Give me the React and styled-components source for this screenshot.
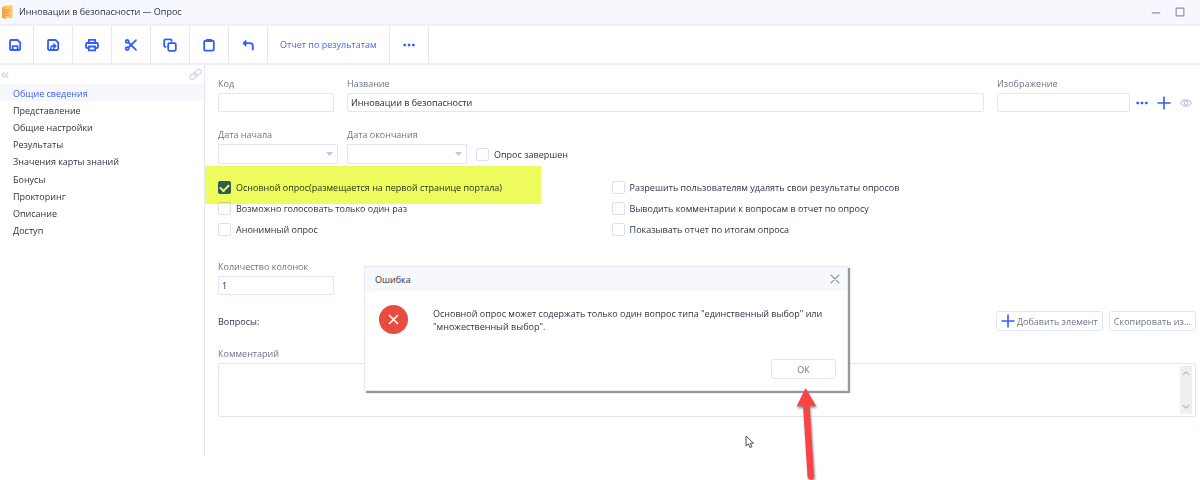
import React from "react";
import styled, { createGlobalStyle } from "styled-components";

const GlobalStyle = createGlobalStyle`
  * {
    box-sizing: border-box;
  }
  body {
    margin: 0;
    background: #fff;
    color: #2c3445;
    font: 9px/13px "Open Sans", "Noto Sans", sans-serif;
  }
  button, input, select, textarea {
    font: inherit;
    color: inherit;
  }
  svg {
    flex-shrink: 0;
  }
`

const Page = styled.div`
  position: relative;
  overflow: hidden;
  min-height: 100vh;
`

const TitleBar = styled.header`
  display: flex;
  align-items: center;
  height: 26px;
  padding: 0 14px 0 1px;
  background: #f7f8fd;
  border-bottom: 2px solid #eceffc;
`

const Title = styled.h1`
  flex: 1;
  margin: 0 0 0 6px;
  font-size: 9px;
  font-weight: 400;
  line-height: 14px;
`

const IconButton = styled.button`
  display: flex;
  align-items: center;
  justify-content: center;
  padding: 0;
  border: 0;
  background: none;
  color: ${props => props.$color || "#335cff"};
`

const WindowButtons = styled.div`
  display: flex;
  gap: 12px;
`

const Toolbar = styled.div`
  display: flex;
  height: 39px;
  border-bottom: 2px solid #eceffc;
`

const ToolButton = styled(IconButton)`
  width: ${props => props.$width || 39}px;
  border-right: 1px solid #e2e7fc;
  padding-right: ${props => props.$shift || 0}px;
`

const ReportButton = styled(ToolButton)`
  width: auto;
  padding: 0 12px;
  color: #4468f6;
`

const Body = styled.div`
  display: flex;
`

const Sidebar = styled.aside`
  width: 205px;
  height: 391px;
  flex-shrink: 0;
  border-right: 1px solid #e2e7fc;
`

const SidebarTop = styled.div`
  display: flex;
  align-items: center;
  justify-content: space-between;
  height: 19px;
  padding: 0 2px 0 1px;
`

const Nav = styled.nav`
  display: grid;
  height: 155px;
  grid-auto-rows: 1fr;
`

const NavItem = styled.a`
  display: flex;
  align-items: center;
  padding: 1px 0 0 13px;
  text-decoration: none;
  color: ${props => (props.$active ? "#3a5ff5" : "#2c3445")};
  background: ${props => (props.$active ? "#f7f8fd" : "transparent")};
`

const Form = styled.form`
  flex: 1;
  min-width: 0;
  padding: 12px 4px 0 13px;
`

const Row = styled.div`
  display: flex;
  align-items: flex-end;
  gap: ${props => props.$gap || 13}px;
  margin-bottom: ${props => props.$bottom || 0}px;
`

const Field = styled.label`
  display: flex;
  flex-direction: column;
  gap: 2px;
  line-height: 14px;
  color: #6c7588;
  width: ${props => (props.$width ? props.$width + "px" : "auto")};
  flex: ${props => (props.$grow ? "1" : "none")};
`

const Input = styled.input`
  width: 100%;
  height: 19px;
  padding: 0 3px;
  border: 1px solid #dfe5fc;
  border-radius: 2px;
  background: #fff;
  color: #1f2634;
`

const SelectBox = styled.span`
  display: grid;
  align-items: center;
  justify-items: end;
  > * {
    grid-area: 1 / 1;
  }
  svg {
    margin-right: 5px;
    pointer-events: none;
  }
`

const Select = styled.select`
  width: 100%;
  height: 20px;
  appearance: none;
  border: 1px solid #dfe5fc;
  border-radius: 1px;
  background: #fff;
`

const ImageActions = styled.div`
  display: flex;
  align-items: center;
  gap: 8px;
  height: 19px;
  margin: 0 3px 0 -8px;
`

const CheckLabel = styled.label`
  display: flex;
  align-items: center;
  gap: 5px;
  height: ${props => props.$height || 21}px;
`

const Checkbox = styled.input`
  display: grid;
  place-content: center;
  width: 13px;
  height: 13px;
  margin: 0;
  appearance: none;
  border: 1px solid #d9e0fb;
  border-radius: 2px;
  background: #fff;
  &:checked {
    border-color: #335cff;
    background: #335cff;
  }
  &:checked::before {
    content: "";
    width: 7px;
    height: 4px;
    margin-bottom: 2px;
    border: solid #fff;
    border-width: 0 0 2px 2px;
    transform: rotate(-45deg);
  }
`

const Options = styled.div`
  position: relative;
  display: grid;
  grid-template-columns: 2fr 3fr;
  column-gap: 4px;
  margin-bottom: 20px;
`

const Highlight = styled.div`
  position: absolute;
  top: -11px;
  left: -13px;
  width: 336px;
  height: 38px;
  background: #edfb5c;
  mix-blend-mode: multiply;
  pointer-events: none;
`

const QuestionsTitle = styled.h2`
  flex: 1;
  margin: 0;
  font-size: 9px;
  font-weight: 400;
`

const Button = styled.button`
  display: flex;
  align-items: center;
  justify-content: center;
  gap: 2px;
  height: 20px;
  padding: 0 4px;
  border: 1px solid #dfe5fc;
  border-radius: 3px;
  background: #fff;
  color: #6c7588;
  svg {
    color: #335cff;
  }
`

const Questions = styled(Row)`
  align-items: center;
`

const CommentBox = styled.span`
  display: flex;
  height: 54px;
  padding: 2px 3px;
  border: 1px solid #dfe5fc;
  border-radius: 2px;
`

const TextArea = styled.textarea`
  flex: 1;
  min-width: 0;
  padding: 0;
  border: 0;
  outline: 0;
  resize: none;
`

const ScrollTrack = styled.span`
  display: flex;
  flex-direction: column;
  align-items: center;
  justify-content: space-between;
  width: 12px;
  padding: 3px 0;
  background: #efefef;
`

const Dialog = styled.section`
  position: absolute;
  top: 266px;
  left: 364px;
  width: 484px;
  border: 1px solid #e6e9f8;
  background: #fff;
  box-shadow: 2px 2px 1px #999;
`

const DialogHeader = styled.header`
  display: flex;
  align-items: center;
  justify-content: space-between;
  height: 24px;
  padding: 0 7px 0 10px;
  background: #f7f8fd;
`

const DialogTitle = styled.h2`
  margin: 0;
  font-size: 9px;
  font-weight: 400;
`

const DialogBody = styled.div`
  display: flex;
  gap: 25px;
  padding: 14px 12px 12px 14px;
`

const Message = styled.p`
  margin: 2px 0 0;
`

const DialogFooter = styled.footer`
  display: flex;
  justify-content: flex-end;
  padding: 13px 11px 11px;
`

const OkButton = styled(Button)`
  width: 65px;
`

const Arrow = styled.svg`
  position: absolute;
  top: 386px;
  left: 792px;
`

const Cursor = styled.svg`
  position: absolute;
  top: 435px;
  left: 745px;
`

const Icon = ({ children, size = 14, ...rest }) => (
  <svg
    width={size}
    height={size}
    viewBox="0 0 14 14"
    fill="none"
    stroke="currentColor"
    strokeWidth="1.8"
    strokeLinecap="round"
    strokeLinejoin="round"
    aria-hidden="true"
    {...rest}
  >
    {children}
  </svg>
);

const Dots = () => (
  <Icon fill="currentColor" stroke="none">
    <rect x="1.4" y="5.800" width="2.6" height="2.4" rx=".6" />
    <rect x="5.7" y="5.800" width="2.6" height="2.4" rx=".6" />
    <rect x="10" y="5.800" width="2.6" height="2.4" rx=".6" />
  </Icon>
);

const Plus = () => (
  <Icon strokeLinecap="butt" strokeWidth="1.6">
    <path d="M7 .5v13M.5 7h13" />
  </Icon>
);

const tools = [
  {
    label: "Сохранить",
    width: 34,
    shift: 4,
    icon: <path d="M2 3.2C2 2.500 2.500 2 3.200 2h6.300l2.700 2.700v6.100c0 .7-.5 1.200-1.200 1.200H3.200C2.500 12 2 11.500 2 10.800zM4.600 12V8.200h5V12" />
  },
  {
    label: "Сохранить и закрыть",
    icon: (
      <>
        <path d="M2 3.200C2 2.500 2.500 2 3.200 2h6.300l2.700 2.700v6.100c0 .7-.5 1.200-1.200 1.200H3.200C2.500 12 2 11.500 2 10.800z" />
        <path d="M5 11.500V9.400c0-.8.500-1.300 1.300-1.300h2.900M7.600 6 9.700 8.100l-2.100 2.100" strokeWidth="1.600" />
      </>
    )
  },
  {
    label: "Печать",
    icon: <path d="M3.800 5V1.800h6.400V5M3.800 10H2.200C1.500 10 1 9.500 1 8.800V6.200C1 5.500 1.500 5 2.200 5h9.600c.7 0 1.200.5 1.200 1.200v2.600c0 .7-.5 1.200-1.200 1.200h-1.600M3.800 8.500h6.400v3.900H3.800z" />
  },
  {
    label: "Вырезать",
    icon: (
      <>
        <circle cx="3.200" cy="3.400" r="1.500" />
        <circle cx="3.200" cy="10.600" r="1.500" />
        <path d="M4.500 4.500 12 11.800M4.500 9.500 12 2.200" />
      </>
    )
  },
  {
    label: "Копировать",
    icon: (
      <>
        <rect x="5.200" y="5.200" width="7.600" height="7.600" rx="1.200" />
        <path d="M2.800 8.800h-.4C1.700 8.800 1.200 8.300 1.200 7.600V2.600c0-.7.5-1.200 1.200-1.200h5c.7 0 1.200.5 1.200 1.200V3" />
      </>
    )
  },
  {
    label: "Вставить",
    icon: (
      <>
        <path d="M4.600 2.600H3.400c-.7 0-1.200.5-1.200 1.200v7.600c0 .7.5 1.200 1.200 1.200h7.200c.7 0 1.200-.5 1.200-1.200V3.800c0-.7-.5-1.200-1.200-1.200H9.400" />
        <path d="M4.800 1.800h4.400v1.400H4.800z" />
      </>
    )
  },
  {
    label: "Отменить",
    icon: (
      <>
        <path d="M4 5.200h5.200c1.600 0 2.600 1 2.600 2.600v3.800" />
        <path d="M4.800 2.600 2.200 5.200l2.600 2.600z" fill="currentColor" strokeWidth="1.200" />
      </>
    )
  }
];

const sections = [
  "Общие сведения",
  "Представление",
  "Общие настройки",
  "Результаты",
  "Значения карты знаний",
  "Бонусы",
  "Прокторинг",
  "Описание",
  "Доступ"
];

const options = [
  "Основной опрос(размещается на первой странице портала)",
  "Разрешить пользователям удалять свои результаты опросов",
  "Возможно голосовать только один раз",
  "Выводить комментарии к вопросам в отчет по опросу",
  "Анонимный опрос",
  "Показывать отчет по итогам опроса"
];

const DateField = ({ label }) => (
  <Field $width={120}>
    {label}
    <SelectBox>
      <Select defaultValue="">
        <option value=""></option>
      </Select>
      <svg width="7" height="4" viewBox="0 0 7 4" aria-hidden="true">
        <path d="M0 0h7L3.500 4z" fill="#c0c8e4" />
      </svg>
    </SelectBox>
  </Field>
);

const Check = ({ label, checked, height }) => (
  <CheckLabel $height={height}>
    <Checkbox type="checkbox" defaultChecked={checked} />
    {label}
  </CheckLabel>
);

const ErrorDialog = () => (
  <Dialog role="alertdialog" aria-labelledby="dialog-title">
    <DialogHeader>
      <DialogTitle id="dialog-title">Ошибка</DialogTitle>
      <IconButton type="button" aria-label="Закрыть" $color="#7e8799">
        <Icon size={10} strokeWidth="1.5"><path d="M1.500 1.500l11 11M12.500 1.500l-11 11" /></Icon>
      </IconButton>
    </DialogHeader>
    <DialogBody>
      <svg width="29" height="29" viewBox="0 0 29 29" aria-hidden="true">
        <circle cx="14.500" cy="14.500" r="14.500" fill="#e74c3c" />
        <path d="M10 10l9 9M19 10l-9 9" stroke="#fff" strokeWidth="1.700" />
      </svg>
      <Message>
        Основной опрос может содержать только один вопрос типа "единственный выбор" или "множественный выбор".
      </Message>
    </DialogBody>
    <DialogFooter>
      <OkButton type="button">ОК</OkButton>
    </DialogFooter>
  </Dialog>
);

const App = () => (
  <Page>
    <GlobalStyle />
    <TitleBar>
      <svg width="12" height="14" viewBox="0 0 12 14" aria-hidden="true">
        <path d="M1 2.500 4 .5h6.500c.6 0 1 .4 1 1v10.500c0 .6-.4 1-1 1H1z" fill="#f7cb66" />
        <path d="M1 2.500h3.500V14L1 13z" fill="#eda748" />
        <path d="M4.500 5h4M4.500 7.500h3M4.500 10h4" stroke="#e58a3a" />
      </svg>
      <Title>Инновации в безопасности — Опрос</Title>
      <WindowButtons>
        <IconButton type="button" aria-label="Свернуть" $color="#8c92a6">
          <Icon size={12} strokeWidth="1.300"><path d="M2.500 8h9" /></Icon>
        </IconButton>
        <IconButton type="button" aria-label="Развернуть" $color="#8c92a6">
          <Icon size={12} strokeWidth="1.300" strokeLinejoin="miter"><path d="M2.500 2.500h9v9h-9z" /></Icon>
        </IconButton>
      </WindowButtons>
    </TitleBar>
    <Toolbar>
      {tools.map(tool => (
        <ToolButton key={tool.label} type="button" aria-label={tool.label} $width={tool.width} $shift={tool.shift}>
          <Icon>{tool.icon}</Icon>
        </ToolButton>
      ))}
      <ReportButton type="button">Отчет по результатам</ReportButton>
      <ToolButton type="button" aria-label="Ещё"><Dots /></ToolButton>
    </Toolbar>
    <Body>
      <Sidebar>
        <SidebarTop>
          <IconButton type="button" aria-label="Свернуть панель" $color="#c3cdf5">
            <Icon size={8} strokeWidth="2"><path d="M6 3 2 7l4 4M12 3 8 7l4 4" /></Icon>
          </IconButton>
          <IconButton type="button" aria-label="Ссылка" $color="#cdd5ee">
            <Icon size={13} strokeWidth="1.200">
              <g transform="rotate(-40 7 7)">
                <rect x="-.5" y="4.500" width="8.500" height="5" rx="2.500" />
                <rect x="6" y="4.500" width="8.500" height="5" rx="2.500" />
              </g>
            </Icon>
          </IconButton>
        </SidebarTop>
        <Nav>
          {sections.map((name, i) => (
            <NavItem key={name} href="#" $active={i === 0}>{name}</NavItem>
          ))}
        </Nav>
      </Sidebar>
      <Form>
        <Row $bottom={16}>
          <Field $width={116}>Код<Input type="text" /></Field>
          <Field $grow>Название<Input type="text" defaultValue="Инновации в безопасности" /></Field>
          <Field $width={133}>Изображение<Input type="text" /></Field>
          <ImageActions>
            <IconButton type="button" aria-label="Выбрать"><Dots /></IconButton>
            <IconButton type="button" aria-label="Добавить"><Plus /></IconButton>
            <IconButton type="button" aria-label="Просмотр" $color="#c0c8e4">
              <Icon strokeWidth="1.100">
                <path d="M1.500 7C4 2.800 10 2.800 12.500 7 10 11.200 4 11.200 1.500 7z" />
                <circle cx="7" cy="7" r="1.700" />
              </Icon>
            </IconButton>
          </ImageActions>
        </Row>
        <Row $bottom={13} $gap={9}>
          <DateField label="Дата начала" />
          <DateField label="Дата окончания" />
          <Check label="Опрос завершен" height={20} />
        </Row>
        <Options>
          {options.map((label, i) => (
            <Check key={label} label={label} checked={i === 0} />
          ))}
          <Highlight />
        </Options>
        <Row $bottom={16}>
          <Field $width={116}>Количество колонок<Input type="text" defaultValue="1" /></Field>
        </Row>
        <Questions $bottom={16} $gap={6}>
          <QuestionsTitle>Вопросы:</QuestionsTitle>
          <Button type="button"><Plus />Добавить элемент</Button>
          <Button type="button">Скопировать из...</Button>
        </Questions>
        <Field>
          Комментарий
          <CommentBox>
            <TextArea />
            <ScrollTrack>
              <Icon size={8} stroke="#b5b5b5"><path d="M2 10l5-5 5 5" /></Icon>
              <Icon size={8} stroke="#b5b5b5"><path d="M2 4l5 5 5-5" /></Icon>
            </ScrollTrack>
          </CommentBox>
        </Field>
      </Form>
    </Body>
    <ErrorDialog />
    <Cursor width="10" height="14" viewBox="0 0 10 14" aria-hidden="true">
      <path d="M1 1v10l2.400-2.100L5 12.500l1.900-.8-1.600-3.500H8.500z" fill="#fff" stroke="#4a4a55" />
    </Cursor>
    <Arrow width="30" height="94" viewBox="0 0 30 94" aria-hidden="true">
      <g style={{ filter: "drop-shadow(1px 2px 1px rgba(0,0,0,.45))" }}>
        <path d="M13.500 2 24 20l-6.500-.5L22 90c.2 4-6.200 4.500-6.500.5L11 20l-6.500.5z" fill="#fb4345" />
      </g>
    </Arrow>
  </Page>
);

export default App;
